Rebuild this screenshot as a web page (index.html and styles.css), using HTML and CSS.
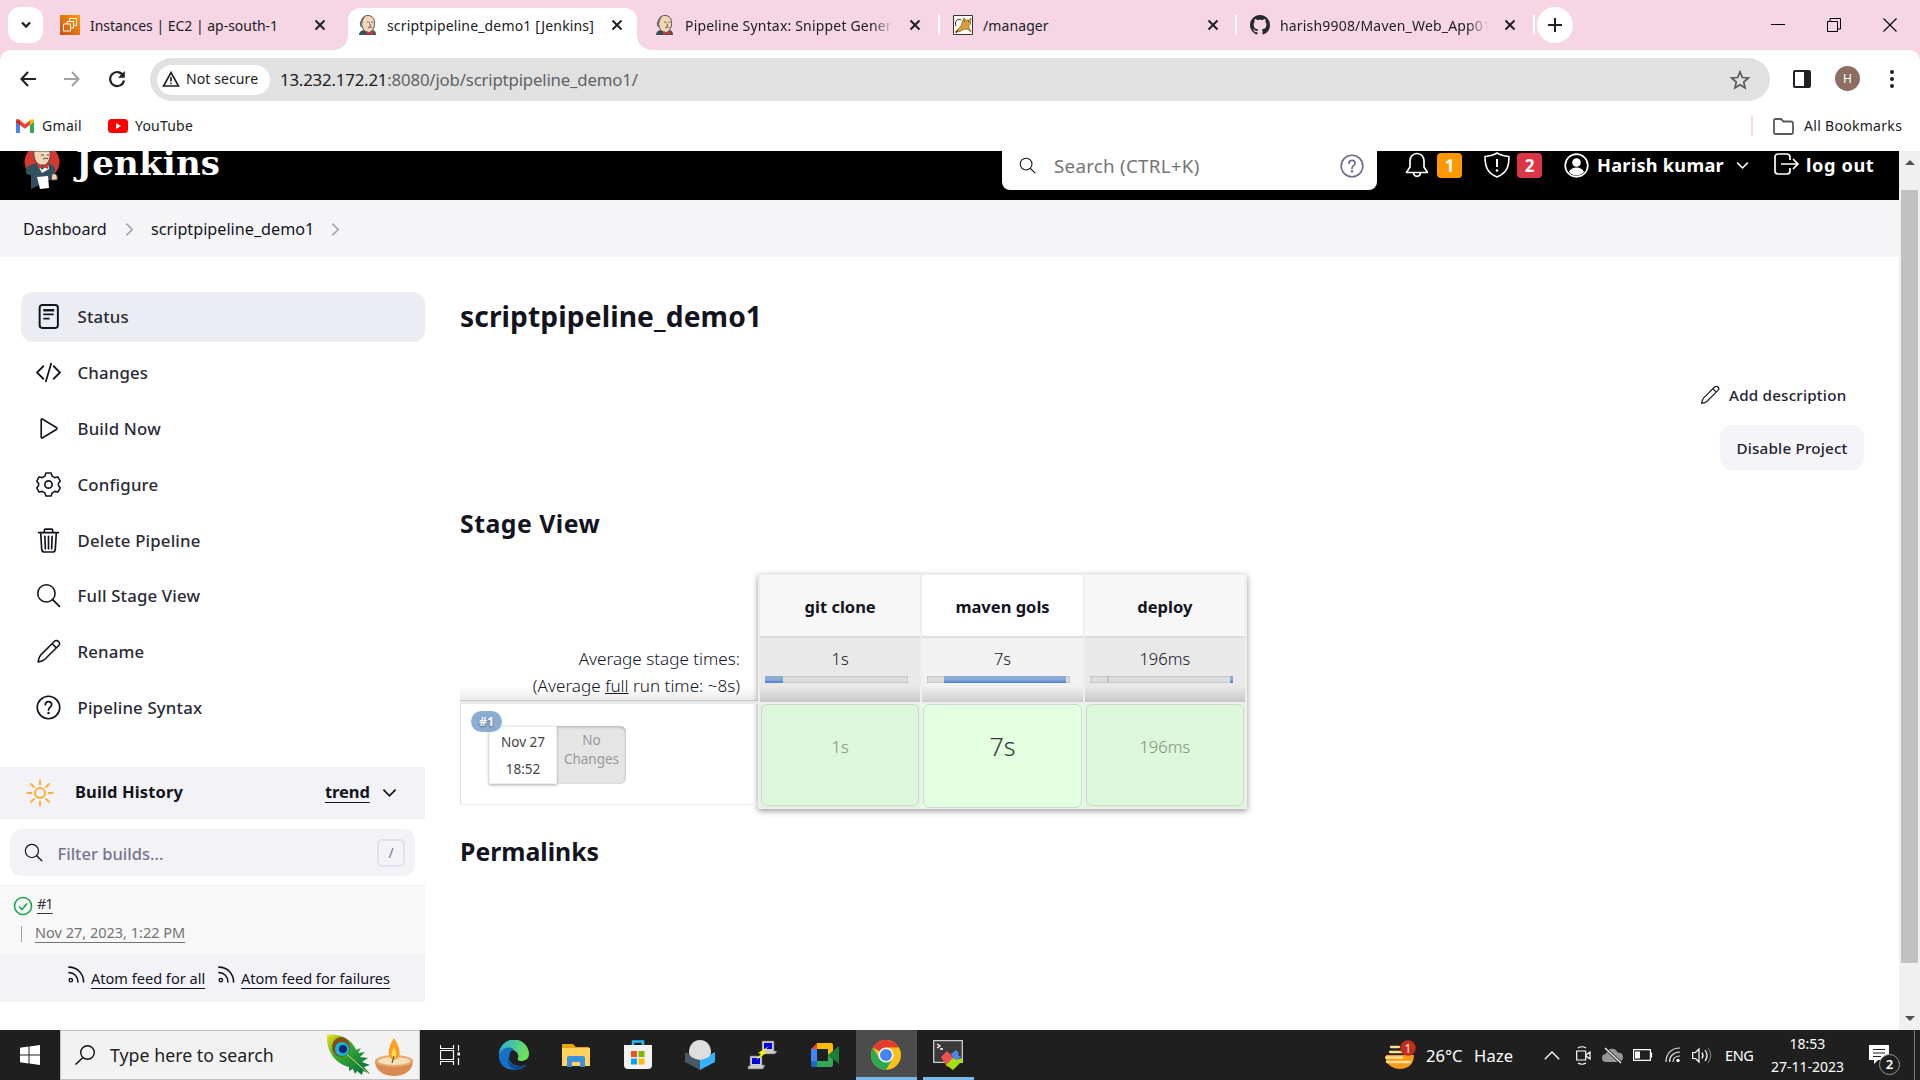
FILE: index.html
```html
<!DOCTYPE html>
<html lang="en">
<head>
<meta charset="utf-8">
<title>scriptpipeline_demo1 [Jenkins]</title>
<link rel="stylesheet" href="styles.css">
</head>
<body>
<svg class="defs" width="0" height="0">
  <symbol id="close" viewBox="0 0 12 12"><path d="M1.5 1.5l9 9M10.5 1.5l-9 9" fill="none" stroke="#202124" stroke-width="2"/></symbol>
  <symbol id="butler" viewBox="0 0 20 20">
    <path d="M1 20c0-3 2-4.500 5-5h8c3 .5 4 2 4 5z" fill="#335061"/>
    <path d="M3.500 8C3 3 6 .5 10 .5s7 3 6.500 8c0 5-2.500 9-6 9S4.500 14 4 11z" fill="#f0d6b7" stroke="#49423d" stroke-width=".9"/>
    <path d="M3.800 5.500C1.500 8 2.500 10 3.500 12M6 2c-1 2-2.500 3-2 6" fill="none" stroke="#6d6b6d" stroke-width="1.500"/>
    <path d="M9 7.500c1-1 2-.5 2.300.2M13 7.400c1-.7 2-.2 2.300.3M11.800 8.500l.8 2.500-1.300.3M10 13c1.500-1 3-1 4.500-.2" fill="none" stroke="#49423d" stroke-width=".8"/>
    <path d="M8.500 16l3.500 1.500 3.500-1.500v4l-3.500-1.300L8.500 20z" fill="#d33833"/>
  </symbol>
  <symbol id="search" viewBox="0 0 24 24"><circle cx="10" cy="10" r="8.300" fill="none" stroke="currentColor" stroke-width="1.500"/><path d="M16 16l6.500 6.500" stroke="currentColor" stroke-width="1.700" stroke-linecap="round"/></symbol>
  <symbol id="pencil" viewBox="0 0 24 24"><path d="M2 22c.3-3 1-5 2.500-6.500L17.500 2.400c1.400-1.400 3.200-.9 4.100 0s1.400 2.700 0 4.100L8.500 19.500C7 21 5 21.700 2 22zM15.500 4.500l4 4" fill="none" stroke="currentColor" stroke-width="1.500" stroke-linejoin="round"/></symbol>
  <symbol id="help" viewBox="0 0 24 24"><circle cx="12" cy="12" r="10.800" fill="none" stroke="currentColor" stroke-width="1.600"/><path d="M9 9.300C9 5.500 15 5.500 15 9.300c0 2.200-3 2.500-3 5" fill="none" stroke="currentColor" stroke-width="1.700" stroke-linecap="round"/><circle cx="12" cy="17.300" r="1.200" fill="currentColor"/></symbol>
  <symbol id="crumb" viewBox="0 0 10 16"><path d="M1.500 1.500L8 8l-6.500 6.500" fill="none" stroke="#a3a3b8" stroke-width="1.800"/></symbol>
  <symbol id="down" viewBox="0 0 16 10"><path d="M1.500 1.500L8 8l6.500-6.500" fill="none" stroke="currentColor" stroke-width="1.900"/></symbol>
  <symbol id="rss" viewBox="0 0 18 18"><circle cx="3" cy="15" r="1.800" fill="none" stroke="#14141f" stroke-width="1.500"/><path d="M1 7c5.500 0 9.500 4 9.500 10M1 1.200c9 0 15.500 7 15.500 15.800" fill="none" stroke="#14141f" stroke-width="1.700" stroke-linecap="round"/></symbol>
</svg>

<header class="tabstrip">
  <div class="tab-search"><svg width="12" height="10" viewBox="0 0 12 10"><path d="M2 2.500l4 4 4-4" fill="none" stroke="#202124" stroke-width="2.300"/></svg></div>
  <div class="tab t1">
    <svg class="fav" viewBox="0 0 20 20"><defs><linearGradient id="aws" x1="0" y1="1" x2="1" y2="0"><stop offset="0" stop-color="#c8511b"/><stop offset="1" stop-color="#ff9900"/></linearGradient></defs><path d="M0 0h20v20H0z" fill="url(#aws)"/><path d="M3.500 9h7v7h-7zM7 9V6.500h6.500V13H10.500M9.500 6.500V3.500H16.500v7h-3" fill="none" stroke="#fff" stroke-width="1"/></svg>
    <span class="title">Instances | EC2 | ap-south-1</span><svg class="x"><use href="#close"/></svg>
  </div>
  <div class="tab active">
    <svg class="fav"><use href="#butler"/></svg><span class="title">scriptpipeline_demo1 [Jenkins]</span><svg class="x"><use href="#close"/></svg>
  </div>
  <div class="tab t3">
    <svg class="fav"><use href="#butler"/></svg><span class="title fade">Pipeline Syntax: Snippet Generator</span><svg class="x"><use href="#close"/></svg>
  </div>
  <i class="sep"></i>
  <div class="tab t4">
    <svg class="fav" viewBox="0 0 20 20"><path d="M.5.500h19v19H.5z" fill="#fffef5" stroke="#333"/><path d="M2 17l6-6 2-6 1-2 2 2h3l2-2-.5 6-2 2 2.500 6-4-3-4 .5-3 2z" fill="#d8a038" stroke="#6b4a10" stroke-width=".6"/><path d="M3 11C1 6 5 3 8 5M5 15l-2 3M11 6l1 1M15 6l1 1" fill="none" stroke="#222" stroke-width="1"/></svg>
    <span class="title">/manager</span><svg class="x"><use href="#close"/></svg>
  </div>
  <i class="sep"></i>
  <div class="tab t5">
    <svg class="fav" viewBox="0 0 16 16"><path fill="#24292f" d="M8 0C3.580 0 0 3.580 0 8c0 3.540 2.290 6.530 5.470 7.590.4.070.55-.17.55-.38 0-.19-.01-.82-.01-1.490-2.010.37-2.530-.49-2.690-.94-.09-.23-.48-.94-.82-1.130-.28-.15-.68-.52-.01-.53.63-.01 1.080.58 1.230.82.72 1.210 1.870.87 2.330.66.070-.52.28-.87.51-1.070-1.780-.2-3.640-.89-3.640-3.950 0-.87.31-1.590.82-2.150-.08-.2-.36-1.020.08-2.120 0 0 .67-.21 2.200.82.640-.18 1.320-.27 2-.27s1.360.090 2 .27c1.530-1.040 2.200-.82 2.200-.82.440 1.100.16 1.920.080 2.120.51.560.82 1.270.82 2.150 0 3.070-1.870 3.750-3.650 3.950.29.25.54.73.54 1.480 0 1.070-.01 1.930-.01 2.200 0 .21.15.46.55.38A8.010 8.010 0 0 0 16 8c0-4.420-3.580-8-8-8z"/></svg>
    <span class="title fade">harish9908/Maven_Web_App01</span><svg class="x"><use href="#close"/></svg>
  </div>
  <i class="sep"></i>
  <div class="newtab"><svg width="14" height="14" viewBox="0 0 14 14"><path d="M7 0v14M0 7h14" stroke="#202124" stroke-width="2"/></svg></div>
  <div class="wincontrols">
    <svg width="14" height="14" viewBox="0 0 14 14"><path d="M0 6.500h14" stroke="#000"/></svg>
    <svg width="14" height="14" viewBox="0 0 14 14"><path d="M.5 3.500h10v10H.5zM3 3.500V.5h10.500v10.500H10.500" fill="none" stroke="#000"/></svg>
    <svg width="14" height="14" viewBox="0 0 14 14"><path d="M.5.500l13 13M13.500.5l-13 13" stroke="#000" stroke-width="1.100"/></svg>
  </div>
</header>

<section class="toolbar">
  <div class="navrow">
    <svg class="back" width="16" height="16" viewBox="0 0 16 16"><path d="M8 1L1.500 8 8 15M1.500 8H16" fill="none" stroke="#202124" stroke-width="2.100"/></svg>
    <svg class="fwd" width="16" height="16" viewBox="0 0 16 16"><path d="M8 1l6.500 7L8 15M14.500 8H0" fill="none" stroke="#a0a0a0" stroke-width="2"/></svg>
    <svg class="reload" width="18" height="18" viewBox="0 0 18 18"><path d="M15.200 5.500A7 7 0 1 0 16 10.500" fill="none" stroke="#202124" stroke-width="2.200"/><path d="M16.800 1v6.800H10z" fill="#202124"/></svg>
    <div class="omnibox">
      <div class="chip"><svg width="18" height="16" viewBox="0 0 18 16"><path d="M9 1.500L16.500 15h-15z" fill="none" stroke="#202124" stroke-width="1.600"/><path d="M9 6v4.500M9 11.700v1.600" stroke="#202124" stroke-width="1.600"/></svg><span>Not secure</span></div>
      <span class="url"><b>13.232.172.21</b>:8080/job/scriptpipeline_demo1/</span>
      <svg class="star" width="20" height="20" viewBox="0 0 20 20"><path d="M10 1.800l2.300 5.700 6 .5-4.600 4 1.400 6L10 14.800 4.900 18l1.400-6L1.700 8l6-.5z" fill="none" stroke="#5a5a5a" stroke-width="1.700"/></svg>
    </div>
    <svg class="panel" width="18" height="18" viewBox="0 0 18 18"><rect x="1" y="1" width="16" height="16" rx="1" fill="none" stroke="#202124" stroke-width="2"/><path d="M11 1h6v16h-6z" fill="#202124"/></svg>
    <div class="avatar">H</div>
    <svg class="dots" width="4" height="18" viewBox="0 0 4 18"><g fill="#202124"><circle cx="2" cy="2" r="2"/><circle cx="2" cy="9" r="2"/><circle cx="2" cy="16" r="2"/></g></svg>
  </div>
  <div class="bookmarks">
    <svg width="18" height="14" viewBox="0 0 18 14"><path d="M0 2v12h4V5.500z" fill="#4285f4"/><path d="M18 2v12h-4V5.500z" fill="#34a853"/><path d="M0 1.500C0 0 1.800-.4 3 .5L9 5.300 15 .5V5L9 9.800 0 3.500z" fill="#ea4335"/><path d="M14 1.300C16-.6 18 0 18 1.800V3l-4 3z" fill="#fbbc04"/><path d="M0 1.800V3l4 3V2z" fill="#c5221f"/></svg>
    <span class="gm">Gmail</span>
    <svg width="20" height="14" viewBox="0 0 20 14"><rect width="20" height="14" rx="3.500" fill="#f00"/><path d="M8 4l5 3-5 3z" fill="#fff"/></svg>
    <span class="yt">YouTube</span>
    <i class="bsep"></i>
    <svg width="21" height="17" viewBox="0 0 21 17"><path d="M1 2.500A1.500 1.500 0 0 1 2.500 1H8l2.500 2.500H18A2 2 0 0 1 20 5v9.500A1.500 1.500 0 0 1 18.500 16h-16A1.500 1.500 0 0 1 1 14.500z" fill="none" stroke="#5a5a5a" stroke-width="1.800"/></svg>
    <span class="all">All Bookmarks</span>
  </div>
</section>

<section class="viewport">
<div class="page">
  <div class="jheader">
    <svg class="jlogo" width="38" height="38" viewBox="0 0 38 38"><ellipse cx="19" cy="11" rx="17.500" ry="17" fill="#d33833"/><path d="M8 38V24C1 25 2 17 5 15l9-3h11c6 2 8 5 7 12l-3 4z" fill="#335061"/><path d="M11 0h16c1 6-1 12-5 14h-5C13 13 10 6 11 0z" fill="#f0d6b7" stroke="#49423d"/><path d="M18 4h3M24 4h2M20 8c2-1 4-1 5 0" stroke="#49423d" fill="none"/><path d="M14 13l5 6 6-6 1 5-7 4z" fill="#fff"/><path d="M15 12.500l5 2.500 5-2.500V18l-5-2-5 2z" fill="#d33833"/><path d="M14 26l11-1 1 12-9 1z" fill="#fff"/><path d="M29 23c4-1 6 1 5 6h-6z" fill="#f0d6b7" stroke="#49423d"/></svg>
    <span class="jword">Jenkins</span>
    <div class="jsearch"><svg width="17" height="17"><use href="#search"/></svg><span>Search (CTRL+K)</span><svg class="q" width="24" height="24"><use href="#help"/></svg></div>
    <div class="jtools">
      <svg class="bell" width="24" height="27" viewBox="0 0 24 27"><path d="M12 1.500C7.500 1.500 5 5 5 9v6l-3.500 5.500h21L19 15V9c0-4-2.500-7.500-7-7.500zM8.500 21c.5 4.500 6.500 4.500 7 0" fill="none" stroke="#fff" stroke-width="1.700" stroke-linejoin="round"/></svg>
      <span class="badge orange">1</span>
      <svg class="shield" width="26" height="26" viewBox="0 0 26 26"><path d="M13 1c4 2.500 7 3 12 3.500 0 10-2 16-12 20.500C3 20.500 1 14.500 1 4.500 6 4 9 3.500 13 1z" fill="none" stroke="#fff" stroke-width="1.600" stroke-linejoin="round"/><path d="M13 7v8" stroke="#fff" stroke-width="2"/><circle cx="13" cy="18.500" r="1.300" fill="#fff"/></svg>
      <span class="badge red">2</span>
      <svg class="person" width="25" height="25" viewBox="0 0 25 25"><circle cx="12.500" cy="12.500" r="11.300" fill="none" stroke="#fff" stroke-width="1.700"/><circle cx="12.500" cy="9.500" r="4.300" fill="#fff"/><path d="M5 19c2-6 13-6 15 0-4 4.500-11 4.500-15 0z" fill="#fff"/></svg>
      <span class="user">Harish kumar</span>
      <svg class="chev" width="13" height="9"><use href="#down"/></svg>
      <svg class="exit" width="26" height="24" viewBox="0 0 26 24"><path d="M16 7V4a3 3 0 0 0-3-3H4a3 3 0 0 0-3 3v14a3 3 0 0 0 3 3h9a3 3 0 0 0 3-3v-3M7 11h17M19 6l5 5-5 5" fill="none" stroke="#fff" stroke-width="1.700"/></svg>
      <span class="logout">log out</span>
    </div>
  </div>
  <nav class="crumbs"><span class="c1">Dashboard</span><svg><use href="#crumb"/></svg><span class="c2">scriptpipeline_demo1</span><svg><use href="#crumb"/></svg></nav>
  <div class="body">
    <aside>
      <ul class="tasks">
        <li class="on"><svg viewBox="0 0 24 24"><rect x="3.500" y="1" width="17.500" height="22" rx="2.500" fill="none" stroke="currentColor" stroke-width="1.900"/><path d="M7 6h10.500" stroke="currentColor" stroke-width="2.300"/><path d="M7 10h10M7 14h6" stroke="currentColor" stroke-width="1.600"/></svg><span>Status</span></li>
        <li><svg viewBox="0 0 24 24"><path d="M7 6L1 12l6 6M17 6l6 6-6 6M14.500 3.500l-5 17" fill="none" stroke="currentColor" stroke-width="1.700" stroke-linecap="round"/></svg><span>Changes</span></li>
        <li><svg viewBox="0 0 24 24"><path d="M5 3.500C5 3 5.400 2.800 6 3l13.500 8q1.300 1 0 2L6 21c-.6.2-1 0-1-.5z" fill="none" stroke="currentColor" stroke-width="1.600"/></svg><span>Build Now</span></li>
        <li><svg viewBox="0 0 24 24"><path d="M9.500 1h5l1 3 2.500 1.400 3-.7 2.300 4L21.500 11v2l1.800 2.300-2.300 4-3-.7-2.500 1.400-1 3h-5l-1-3L6 18.600l-3 .7-2.300-4L2.500 13v-2L.7 8.700 3 4.700l3 .7L8.500 4z" fill="none" stroke="currentColor" stroke-width="1.500" stroke-linejoin="round"/><circle cx="12" cy="12" r="3.500" fill="none" stroke="currentColor" stroke-width="1.600"/></svg><span>Configure</span></li>
        <li><svg viewBox="0 0 24 24"><path d="M2.500 4.500h19M8 4.500V1.800Q8 1 9 1h6q1 0 1 .8v2.700M4.500 4.500l1 16Q5.700 23 8 23h8q2.300 0 2.500-2.500l1-16M8.500 8l.5 12M12 8v12M15.500 8L15 20" fill="none" stroke="currentColor" stroke-width="1.600" stroke-linecap="round"/></svg><span>Delete Pipeline</span></li>
        <li><svg viewBox="0 0 24 24"><use href="#search"/></svg><span>Full Stage View</span></li>
        <li><svg viewBox="0 0 24 24"><use href="#pencil"/></svg><span>Rename</span></li>
        <li><svg viewBox="0 0 24 24"><use href="#help"/></svg><span>Pipeline Syntax</span></li>
      </ul>
      <div class="bh-head"><svg width="28" height="28" viewBox="0 0 28 28"><g fill="none" stroke="#fbb03b" stroke-width="2" stroke-linecap="round"><circle cx="14" cy="14" r="5"/><path d="M14 1.500v4M14 22.500v4M1.500 14h4M22.500 14h4M5 5l3 3M20 20l3 3M5 23l3-3M20 8l3-3"/></g></svg><b>Build History</b><a>trend</a><svg class="dn" width="15" height="10"><use href="#down"/></svg></div>
      <div class="filter"><svg width="19" height="19"><use href="#search"/></svg><span>Filter builds...</span><kbd>/</kbd></div>
      <div class="build">
        <div class="b1"><svg width="20" height="20" viewBox="0 0 20 20"><circle cx="10" cy="10" r="8.500" fill="none" stroke="#1ea64b" stroke-width="1.600"/><path d="M6 10.500l3 3 5-6" fill="none" stroke="#1ea64b" stroke-width="1.600"/></svg><a>#1</a></div>
        <div class="b2"><a>Nov 27, 2023, 1:22 PM</a></div>
      </div>
      <div class="feeds"><svg><use href="#rss"/></svg><a class="f1">Atom feed for all</a><svg><use href="#rss"/></svg><a class="f2">Atom feed for failures</a></div>
    </aside>
    <main>
      <h1>scriptpipeline_demo1</h1>
      <div class="actions">
        <div class="add"><svg width="20" height="20"><use href="#pencil"/></svg><span>Add description</span></div>
        <div class="disable">Disable Project</div>
      </div>
      <h2 class="sv">Stage View</h2>
      <div class="stage">
        <div class="runs">
          <div class="avg">Average stage times:<br>(Average <u>full</u> run time: ~8s)</div>
          <div class="run"><span class="num">#1</span><div class="when"><span>Nov 27</span><span>18:52</span></div><div class="chg">No<br>Changes</div></div>
        </div>
        <div class="cols">
          <div class="col"><div class="name">git clone</div><div class="time">1s<div class="bar"><i style="width:18px"></i></div></div><div class="cell"><span>1s</span></div></div>
          <div class="col hi"><div class="name">maven gols</div><div class="time">7s<div class="bar"><i style="margin-left:17px;width:122px"></i></div></div><div class="cell"><span>7s</span></div></div>
          <div class="col"><div class="name">deploy</div><div class="time">196ms<div class="bar tick"><i style="margin-left:140px;width:3px"></i></div></div><div class="cell"><span>196ms</span></div></div>
        </div>
      </div>
      <h2 class="perma">Permalinks</h2>
    </main>
  </div>
</div>
<div class="scroll"><i class="up"></i><i class="thumb"></i><i class="dwn"></i></div>
</section>

<footer class="taskbar">
  <svg class="win" width="20" height="20" viewBox="0 0 20 20"><path d="M0 2.800L8.500 1.600v8H0zM9.500 1.500L20 0v9.600H9.500zM0 10.500h8.500v8L0 17.200zM9.500 10.500H20V20L9.500 18.600z" fill="#fff"/></svg>
  <div class="tsearch"><svg width="20" height="20" viewBox="0 0 20 20"><circle cx="12.500" cy="7.500" r="6.800" fill="none" stroke="#111" stroke-width="1.400"/><path d="M8 12.500L.5 19.500" stroke="#111" stroke-width="1.500"/></svg><span>Type here to search</span>
    <svg class="art" width="90" height="42" viewBox="0 0 90 42"><defs><linearGradient id="leaf" x1="0" y1="0" x2="1" y2="1"><stop offset="0" stop-color="#f4e01e"/><stop offset=".35" stop-color="#3caf2b"/><stop offset="1" stop-color="#00684a"/></linearGradient></defs><path d="M1 1c12-2 25 4 29 15l5-2-3 5 7-1-5 5 8 1-6 4 8 3-6 2 6 7-7-3-1 4-5-4-2 3-2-5-4 2v-4C10 30 0 18 1 1z" fill="url(#leaf)"/><path d="M15 15l28 25" stroke="#f2d35b"/><ellipse cx="15" cy="13" rx="9" ry="10" fill="#8a4b16"/><circle cx="16" cy="15" r="7" fill="#10b7d8"/><circle cx="17" cy="15" r="4" fill="#15237a"/><path d="M49 27c0 20 38 20 38 0z" fill="#d98a50"/><ellipse cx="68" cy="27" rx="19" ry="6" fill="#e6a86c"/><ellipse cx="68" cy="27" rx="16" ry="4" fill="#f3dfb8"/><path d="M68 4c7 11 8 20 0 22-8-2-6-13 0-22z" fill="#ff9d1c"/><path d="M68 13c3 6 3 9 0 12-3-3-3-7 0-12z" fill="#ffd95a"/><path d="M68 22l-2 7" stroke="#444"/></svg>
  </div>
  <svg class="tv" width="20" height="20" viewBox="0 0 20 20"><path d="M.5 0v3.500h13V0M.5 20v-3.500h13V20M.5 5.500h13v9H.5zM18.500 0v6M18.500 13v7" fill="none" stroke="#fff" stroke-width="1.200"/><path d="M17.500 7.500h2.500v3h-2.500z" fill="#fff"/></svg>
  <div class="apps">
    <span class="app"><svg width="30" height="30" viewBox="0 0 30 30"><defs><linearGradient id="e1" x1="0" y1="0" x2="1" y2=".3"><stop offset="0" stop-color="#2aa8e0"/><stop offset="1" stop-color="#6be35b"/></linearGradient></defs><path d="M0 15A15 15 0 0 1 30 14c0 5-4 7-8 7-3 0-4-1-3-3 3-9-15-13-19-3z" fill="url(#e1)"/><path d="M0 15c2-8 11-9 15-6-7 2-8 18 7 17 3 0 5-1 6-1.500C20 34-1 31 0 15z" fill="#1572c8"/><path d="M12 14c-6 9 3 15 16 10.500C23 33 9 31 9 20c0-3 1-5 3-6z" fill="#114a8b"/></svg></span>
    <span class="app"><svg width="28" height="24" viewBox="0 0 28 24"><path d="M0 1h11l3 3h13v8H0z" fill="#e5a50a"/><path d="M0 5h28v18H0z" fill="#ffd35c"/><path d="M5 24V15q0-2 2-2h14q2 0 2 2v9h-5v-5h-8v5z" fill="#3c8fdc"/></svg></span>
    <span class="app"><svg width="30" height="30" viewBox="0 0 30 30"><path d="M10 6V1.500h10V6" fill="none" stroke="#2fb8f0" stroke-width="2.500"/><path d="M1 5h28v20q0 4-4 4H5q-4 0-4-4z" fill="#f2f2f2"/><path d="M8 11h6v6H8z" fill="#f25022"/><path d="M15.500 11h6v6h-6z" fill="#7fba00"/><path d="M8 18.500h6v6H8z" fill="#00a4ef"/><path d="M15.500 18.500h6v6h-6z" fill="#ffb900"/></svg></span>
    <span class="app"><svg width="30" height="30" viewBox="0 0 30 30"><path d="M0 12l15 8v10L0 22z" fill="#455a64"/><path d="M30 12l-15 8v10l15-8z" fill="#34b3f8"/><path d="M15 0c7 0 11 6 11 12 0 5-5 7-11 8-6-1-11-3-11-8C4 6 8 0 15 0z" fill="#dedede"/></svg></span>
    <span class="app"><svg width="30" height="30" viewBox="0 0 30 30"><path d="M15 1h12v10h3l-2 3H14v-3h1z" fill="#ccc" stroke="#666" stroke-width=".6"/><path d="M17 3h8v6h-8z" fill="#0000e0"/><path d="M3 16h12v9h3l-2 4H1v-3h2z" fill="#ccc" stroke="#666" stroke-width=".6"/><path d="M5 18h8v6H5z" fill="#0000e0"/><path d="M22 6l-11 7 3 1-5 6 10-7-3-1z" fill="#ff0"/></svg></span>
    <span class="app"><svg width="28" height="24" viewBox="0 0 28 24"><path d="M0 6l6-6v6z" fill="#ea4335"/><path d="M6 0h14q2 0 2 2v6l-5 5V6H6z" fill="#fbbc04"/><path d="M0 6h6v12H0z" fill="#4285f4"/><path d="M0 18h6v6H2q-2 0-2-2z" fill="#1967d2"/><path d="M6 18h11v-6l5 4v6q0 2-2 2H6z" fill="#34a853"/><path d="M17 12l11-9v18z" fill="#188038"/></svg></span>
    <span class="app sel"><svg width="30" height="30" viewBox="0 0 30 30"><circle cx="15" cy="15" r="15" fill="#fbc116"/><path d="M15 15L2 7.500A15 15 0 0 1 28 7.500H15z" fill="#e33b2e"/><path d="M2 7.500A15 15 0 0 0 15 30l6.500-11.300L8.500 19z" fill="#2da94f"/><circle cx="15" cy="15" r="7.500" fill="#fff"/><circle cx="15" cy="15" r="6" fill="#4285f4"/></svg></span>
    <span class="app open"><svg width="30" height="30" viewBox="0 0 30 30"><path d="M.7.700h28.600v21.600H.7z" fill="#3a3a3a" stroke="#ccc" stroke-width="1.300"/><path d="M4 4l3 2-3 2M7 9h3" fill="none" stroke="#fff" stroke-width="1.300"/><path d="M8 17l6-6 4 4 3 5-7 7z" fill="#f0504c"/><path d="M18 14l5-4 3 3-1 2 3 2-6 5z" fill="#4b86e8"/><path d="M13 25l7-7 3 2 6-2v3L20 30z" fill="#a4e010"/></svg></span>
  </div>
  <div class="tray">
    <svg class="haze" width="31" height="30" viewBox="0 0 31 30"><path d="M1 15h28c0 9-6 14-14 14-7 0-12-4-14-8z" fill="#f79a1e"/><path d="M6 7h8M5 12h13M1 17.500h16M2 22h23" stroke="#ffe08a" stroke-width="2.300" stroke-linecap="round"/><circle cx="23" cy="8" r="7.800" fill="#c42b1c"/><text x="23" y="12.500" font-size="12" text-anchor="middle" fill="#fff">1</text></svg>
    <span class="deg">26°C</span><span class="hz">Haze</span>
    <svg class="up2" width="16" height="9" viewBox="0 0 16 9"><path d="M.8 8.200L8 1l7.200 7.200" fill="none" stroke="#fff" stroke-width="1.300"/></svg>
    <svg class="meet" width="15" height="19" viewBox="0 0 15 19"><path d="M.7 5h9v9h-9zM10 9l4-3v7l-4-3M2 2q4-2.500 8 0M2 17q4 2.500 8 0" fill="none" stroke="#fff" stroke-width="1.200"/></svg>
    <svg class="cloud" width="21" height="17" viewBox="0 0 21 17"><path d="M4 15a4 4 0 0 1 0-8A6 6 0 0 1 15.500 5.500 4.800 4.800 0 0 1 17 15z" fill="#969696"/><path d="M3 1l16 15" stroke="#1f1f1f" stroke-width="3"/><path d="M3 1l16 15" stroke="#fff" stroke-width="1.200"/></svg>
    <svg class="bat" width="20" height="12" viewBox="0 0 20 12"><path d="M.6.600h16.800v10.800H.6zM18.500 3.500v5" fill="none" stroke="#fff" stroke-width="1.200"/><path d="M2 2.500h5v7H2z" fill="#fff"/></svg>
    <svg class="wifi" width="16" height="16" viewBox="0 0 16 16"><path d="M1 15C1 6 7 1 15 1M4.500 15c0-6 4-10 10.500-10M8 15c0-3.500 2.500-6 7-6" fill="none" stroke="#ddd" stroke-width="1.200"/><circle cx="13" cy="13.500" r="1.700" fill="#fff"/></svg>
    <svg class="vol" width="20" height="17" viewBox="0 0 20 17"><path d="M.7 5.500h2.800L7 2v13l-3.500-3.500H.7zM10 5.500q2 3 0 6M13 3q4 5.500 0 11" fill="none" stroke="#fff" stroke-width="1.200"/><path d="M16 1q5.500 7.500 0 15" fill="none" stroke="#777" stroke-width="1.200"/></svg>
    <span class="eng">ENG</span>
    <div class="clock"><span class="ck">18:53</span><span class="dt">27-11-2023</span></div>
    <div class="notif"><svg width="20" height="20" viewBox="0 0 20 20"><path d="M0 0h20v15H9l-4 4v-4H0z" fill="#fff"/><path d="M4 4.500h12M4 8h12M4 11.500h8" stroke="#1f1f1f" stroke-width="1.200"/></svg><b>2</b></div>
    <i class="edge"></i>
  </div>
</footer>
</body>
</html>
```
FILE: styles.css
```css
* { box-sizing: border-box; }
body { margin: 0; width: 1920px; height: 1080px; overflow: hidden; background: #fff; font-family: "Noto Sans", "Open Sans", sans-serif; color: #14141f; display: flex; flex-direction: column; }
span, a, b, h1, h2 { white-space: nowrap; }
svg { flex: none; display: block; }
.defs { position: absolute; }

/* tab strip */
.tabstrip { height: 50px; background: #f6d5e4; display: flex; align-items: center; flex: none; font-size: 14px; color: #202124; }
.tab-search { width: 35px; height: 36px; margin-left: 8px; border-radius: 12px; background: #fff; display: grid; place-items: center; }
.tab { display: flex; align-items: center; height: 50px; }
.fav { width: 20px; height: 20px; margin-right: 10px; }
.title { width: 208px; overflow: hidden; }
.fade { letter-spacing: .18px; -webkit-mask-image: linear-gradient(90deg, #000 90%, transparent); mask-image: linear-gradient(90deg, #000 90%, transparent); }
.x { width: 12px; height: 12px; }
.t1 { width: 305px; padding-left: 17px; }
.t1 .title { width: 224px; letter-spacing: -.02px; }
.active { width: 289px; height: 42px; margin-top: 8px; padding: 0 0 8px 10px; background: #fff; border-radius: 12px 12px 0 0; position: relative; letter-spacing: .16px; }
.active .fav { margin-right: 9px; }
.active .title { width: 213px; }
.active::before, .active::after { content: ""; position: absolute; bottom: 0; width: 14px; height: 14px; }
.active::before { left: -14px; background: radial-gradient(circle at 0 0, transparent 13.500px, #fff 14px); }
.active::after { right: -14px; background: radial-gradient(circle at 100% 0, transparent 13.500px, #fff 14px); }
.active .x { margin-left: 11px; }
.t3 { width: 301px; padding-left: 18px; }
.t3 .x, .t5 .x { margin-left: 16px; }
.sep { width: 2px; height: 20px; background: #fff; }
.t4 { width: 295px; padding-left: 13px; }
.t4 .title { width: 224px; letter-spacing: .1px; }
.t5 { width: 296px; padding-left: 13px; }
.newtab { width: 36px; height: 36px; border-radius: 50%; background: #fff; display: grid; place-items: center; margin-left: 2px; }
.wincontrols { display: flex; margin-left: 198px; gap: 42px; }

/* toolbar */
.toolbar { height: 101px; flex: none; color: #202124; background: radial-gradient(circle at 12px 12px, #fff 12px, #f6d5e4 12.500px) 0 0/12px 12px no-repeat, radial-gradient(circle at 0 12px, #fff 12px, #f6d5e4 12.500px) 100% 0/12px 12px no-repeat, #fff; }
.navrow { display: flex; align-items: center; padding: 8px 0 0 20px; height: 51px; }
.fwd { margin-left: 28px; }
.reload { margin: 0 24px 0 28px; }
.back, .fwd, .reload, .panel, .avatar, .dots { margin-bottom: 2px; }
.omnibox { width: 1620px; height: 43px; border-radius: 22px; background: #e1e1e1; display: flex; align-items: center; padding: 0 20px 0 7px; }
.chip { width: 113px; height: 30px; border-radius: 15px; background: #fff; display: flex; align-items: center; padding: 0 0 2px 5px; gap: 6px; font-size: 14px; letter-spacing: .1px; }
.url { margin-left: 10px; font-size: 16.800px; color: #5f6368; letter-spacing: -.17px; }
.url b { font-weight: 400; color: #202124; }
.star { margin-left: auto; }
.panel { margin-left: 23px; }
.avatar { width: 25px; height: 25px; margin-left: 24px; border-radius: 50%; background: #8d6e63; color: #fff; font-size: 12px; display: grid; place-items: center; }
.dots { margin-left: 30px; }
.bookmarks { display: flex; align-items: center; height: 50px; padding-left: 16px; font-size: 14px; }
.bookmarks span { margin-top: -2px; }
.gm { width: 66px; margin-left: 8px; letter-spacing: .3px; }
.yt { width: 90px; margin-left: 7px; letter-spacing: .2px; }
.bsep { width: 2px; height: 20px; background: #f6d5e4; margin-left: auto; margin-right: 20px; }
.all { width: 116px; margin-left: 10px; letter-spacing: .3px; }

/* page */
.viewport { height: 879px; flex: none; display: flex; overflow: hidden; }
.page { width: 1899px; }
.jheader { height: 49px; background: #000; display: flex; align-items: flex-start; padding-left: 23px; color: #fff; overflow: hidden; }
.jword { font: bold 34px/40px "DejaVu Serif", serif; margin: -8px 0 0 15px; width: 926px; letter-spacing: .2px; }
.jsearch { width: 375px; height: 39px; background: #fff; border-radius: 0 0 8px 8px; display: flex; align-items: center; padding: 0 13px 9px 17px; color: #14141f; }
.jsearch svg { margin-top: -1px; }
.jsearch span { margin: -1px 0 0 18px; font-size: 18.800px; letter-spacing: .25px; color: #757575; }
.jsearch .q { margin-left: auto; color: #6b6b8a; }
.jtools { display: flex; align-items: center; height: 28px; margin-left: 28px; font-size: 18.200px; font-weight: 700; }
.badge { width: 25px; height: 25px; border-radius: 4px; display: grid; place-items: center; font-size: 17px; }
.orange { background: #ff9800; margin-left: 8px; }
.red { background: #dc3545; margin-left: 7px; }
.shield { margin-left: 22px; }
.person { margin-left: 22px; }
.user { margin-left: 8px; width: 128px; letter-spacing: .25px; }
.chev { margin-left: 11px; }
.exit { margin-left: 25px; }
.logout { margin-left: 6px; letter-spacing: .6px; }
.crumbs { height: 57px; background: #f5f5f8; display: flex; align-items: center; padding-left: 23px; font-size: 16.200px; }
.crumbs svg { width: 9px; height: 15px; margin-top: 1px; }
.c1 { width: 102px; }
.c2 { width: 180px; margin-left: 17px; }
.body { display: flex; }
aside { width: 425px; flex: none; padding-top: 35px; }
.tasks { list-style: none; margin: 0; padding: 0 0 0 21px; display: grid; gap: 5.900px; height: 475px; align-content: start; font-size: 16.800px; font-weight: 500; letter-spacing: .17px; }
.tasks li { height: 50px; border-radius: 12px; display: flex; align-items: center; padding: 0 0 1px 15px; gap: 16px; color: #14141f; }
.tasks svg { width: 25px; height: 25px; }
.tasks span { color: #2a2a36; padding-left: .5px; }
.tasks .on span { margin-top: -1px; }
.on { background: #ecedf3; }
.bh-head { height: 52px; background: #f2f2f7; display: flex; align-items: center; padding-left: 26px; font-size: 16.500px; }
.bh-head b { font-weight: 700; margin: -3px 0 0 21px; width: 250px; letter-spacing: .12px; }
a { text-decoration: underline; text-underline-offset: 4px; text-decoration-thickness: 1px; }
.bh-head a { font-weight: 700; width: 46px; margin-top: -3px; letter-spacing: -.1px; }
.dn { margin-left: 11px; }
.filter { height: 47px; margin: 10px 10px 9px; border-radius: 12px; background: #f2f2f7; display: flex; align-items: center; padding: 0 10px 0 14px; font-size: 16.500px; color: #74748c; font-weight: 500; }
.filter svg { color: #14141f; }
.filter span { margin: 1px 0 0 14.500px; }
kbd { margin-left: auto; width: 28px; height: 28px; border: 2px solid #e2e2ee; border-radius: 5px; font: 14px/23px "Noto Sans", sans-serif; text-align: center; }
.build { height: 69px; background: #f8f8f8; border-top: 1px solid #f0f0f0; font-size: 14.500px; color: #333; }
.b1 { display: flex; align-items: center; padding: 7px 0 0 13px; gap: 4px; height: 34px; }
.b1 svg { margin-top: -1px; }
.b1 a { margin-top: -7px; letter-spacing: -1px; }
.b2 { display: flex; align-items: center; margin: 6px 0 0 21px; height: 16px; padding-left: 13px; border-left: 1px solid #a0a0a8; color: #737373; }
.b2 a { margin-top: -4px; }
.feeds { height: 48px; background: #f2f2f7; display: flex; align-items: center; padding-left: 68px; font-size: 14.550px; }
.feeds svg { width: 17px; height: 17px; margin-top: -7px; }
.f1 { width: 127px; margin-left: 6px; }
.f2 { margin-left: 6px; }

main { flex: 1; padding: 35px 35px 0; }
h1 { margin: 0; font-size: 28.200px; line-height: 48px; font-weight: 700; height: 50px; letter-spacing: .1px; }
.actions { height: 149px; display: flex; flex-direction: column; align-items: flex-end; padding-top: 33px; font-size: 15.200px; font-weight: 500; letter-spacing: .2px; color: #23232f; }
.add { display: flex; align-items: center; gap: 9px; height: 40px; padding-right: 17px; }
.add span { width: 118px; }
.disable { margin-top: 10px; width: 144px; height: 45px; border-radius: 12px; background: #f5f5f9; display: grid; place-items: center; }
h2 { margin: 12px 0 0; font-size: 24.800px; line-height: 40px; font-weight: 700; }
.sv { letter-spacing: .5px; }
.stage { display: flex; margin-top: 31px; height: 235px; font-weight: 300; }
.runs { width: 298px; padding-top: 64px; }
.avg { height: 63px; padding: 7px 18px 0 0; text-align: right; font-size: 17.100px; line-height: 27px; background: linear-gradient(transparent 78%, #ececec); border-bottom: 1px solid #c8c8c8; }
.run { position: relative; height: 104px; border-top: 3px solid #e9e9e9; border-left: 1px solid #ddd; border-bottom: 1px solid #eee; padding: 22px 0 0 28px; display: flex; }
.num { position: absolute; left: 10px; top: 7px; width: 31px; height: 21px; border-radius: 11px; background: #8badd3; color: #fff; font-size: 12.500px; font-weight: 700; line-height: 21px; text-align: center; text-shadow: 0 1px 2px #456; z-index: 1; }
.when { width: 68px; height: 58px; border: 1px solid #eee; box-shadow: 0 1px 3px #aaa; display: grid; font-size: 13.500px; font-weight: 400; text-align: center; color: #444; align-items: center; padding-top: 1px; }
.chg { width: 69px; height: 58px; background: #e5e5e5; border-radius: 0 6px 6px 0; box-shadow: inset 0 1px 3px #aaa; text-align: center; color: #999; font-size: 13.500px; line-height: 19px; padding-top: 5px; font-weight: 400; }
.cols { display: grid; grid-template-columns: 1fr 1fr 1fr; gap: 2px; padding: 1px 2px; background: #eee; box-shadow: 0 2px 6px #999; width: 489px; flex: none; }
.name { height: 63px; background: #f7f7f7; border-bottom: 2px solid #ddd; display: grid; place-items: center; padding-top: 2px; font-weight: 700; font-size: 16.500px; }
.time { height: 64px; background: linear-gradient(#e9e9e9 75%, #c6c6c6); text-align: center; font-size: 16.500px; line-height: 24px; padding-top: 9px; }
.bar { width: 143px; height: 7px; margin: 5px 0 0 5px; background: #ddd; box-shadow: inset 0 0 2px #999; }
.bar i { display: block; height: 7px; background: linear-gradient(#8badd3 50%, #4a7bd0); }
.tick { background: linear-gradient(90deg, #ddd 17px, #c4c4c4 17px 19px, #ddd 19px); }
.cell { height: 106px; background: #dff6dc; border-top: 2px solid #eee; padding: 0 1px; }
.cell span { display: grid; place-items: center; height: 102px; border: 1px solid #cfd8cf; border-radius: 6px; color: #809080; font-size: 16.500px; padding-bottom: 18px; background: #dcf7da; }
.hi .name { background: #fff; }
.hi .time { background: linear-gradient(#f2f2f2 75%, #cdcdcd); }
.hi .cell, .hi .cell span { background: #e2ffe0; }
.hi .cell span { color: #333; font-size: 25px; height: 104px; padding-bottom: 21px; }
.perma { margin-top: 22px; }

.scroll { width: 21px; background: #f0f0f0; display: flex; flex-direction: column; align-items: center; }
.up, .dwn { width: 0; height: 0; border: 5px solid transparent; }
.up { border-bottom-color: #505050; border-top: 0; margin-top: 9px; }
.dwn { border-top-color: #505050; border-bottom: 0; margin-top: 53px; }
.thumb { width: 17px; height: 773px; background: #c1c1c1; margin-top: 25px; }

/* taskbar */
.taskbar { height: 50px; flex: none; background: #1f1f1f; color: #fff; display: flex; align-items: center; padding-left: 20px; }
.tsearch { width: 360px; height: 50px; margin-left: 20px; background: #f2f2f2; border: 1px solid #c0c0c0; display: flex; align-items: center; padding-left: 14px; color: #222; font-size: 17.800px; }
.tsearch span { margin-left: 15px; width: 216px; }
.tv { margin-left: 20px; }
.apps { display: flex; margin-left: 23px; }
.app { width: 62.100px; height: 50px; display: grid; place-items: center; }
.sel { background: #4c4c4c; border-bottom: 3px solid #76b9ed; width: 61px; padding-top: 3px; }
.open { width: 51px; margin-left: 6px; border-bottom: 3px solid #76b9ed; padding-top: 3px; }
.tray { display: flex; align-items: center; margin-left: auto; font-size: 16.500px; }
.deg { width: 38px; margin-left: 10px; }
.hz { width: 40px; margin-left: 10px; letter-spacing: .2px; }
.up2 { margin-left: 30px; }
.meet { margin-left: 16px; }
.cloud { margin-left: 11px; }
.bat { margin-left: 10px; }
.wifi { margin-left: 12px; }
.vol { margin-left: 11px; }
.eng { margin-left: 13px; font-size: 14.500px; width: 29px; letter-spacing: -.4px; }
.clock { margin-left: 15px; width: 77px; display: grid; text-align: center; font-size: 14px; line-height: 23px; }
.notif { position: relative; margin-left: 23px; width: 30px; height: 20px; }
.notif b { position: absolute; left: 10px; top: 9px; width: 21px; height: 21px; border-radius: 50%; border: 1px solid #999; background: #1f1f1f; font-size: 13px; line-height: 19px; text-align: center; font-weight: 600; }
.edge { width: 1px; height: 50px; background: #777; margin: 0 5px 0 15px; }
```
